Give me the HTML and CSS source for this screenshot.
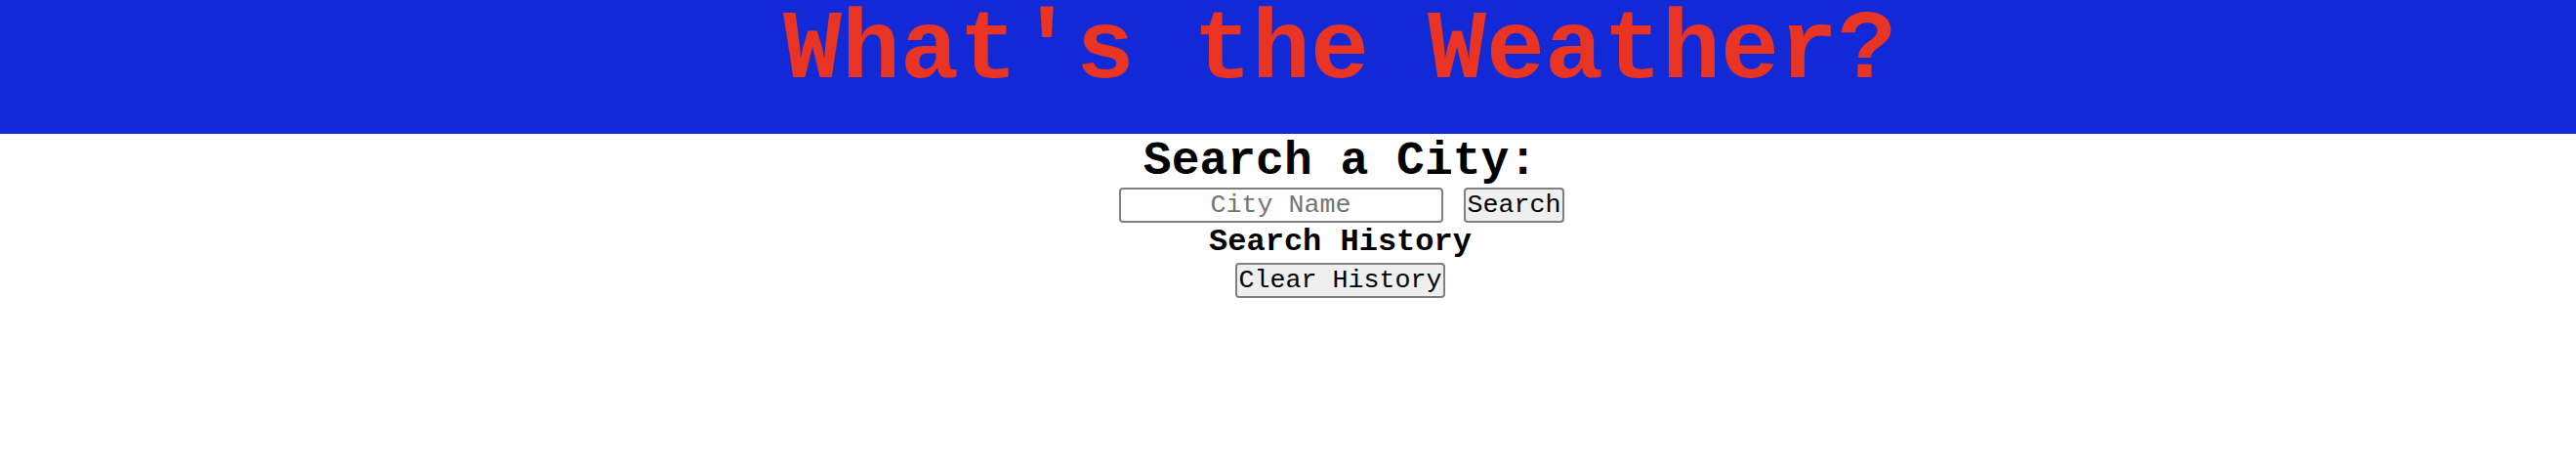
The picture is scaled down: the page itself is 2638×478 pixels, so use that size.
FILE: index.html
```html
<!DOCTYPE html>
<html lang="en">
<head>
<meta charset="utf-8">
<title>What's the Weather?</title>
<link rel="stylesheet" href="styles.css">
</head>
<body>
<header class="masthead">
  <h1 class="masthead__title">What's the Weather?</h1>
</header>
<main class="search">
  <h2 class="search__heading">Search a City:</h2>
  <div class="search__row">
    <input class="search__input" type="text" placeholder="City Name">
    <button class="btn" type="button">Search</button>
  </div>
  <h3 class="search__history">Search History</h3>
  <button class="btn" type="button">Clear History</button>
</main>
</body>
</html>
```

FILE: styles.css
```css
html, body {
  margin: 0;
  padding: 0;
  background: #ffffff;
}

body {
  font-family: "Courier New", Courier, "Liberation Mono", monospace;
  color: #000000;
}

.masthead {
  background: #1129d6;
  padding: 0 0 31px 106px;
  text-align: center;
}

.masthead__title {
  margin: 0;
  font-size: 100px;
  line-height: 106px;
  font-weight: bold;
  color: #ea3423;
}

.search {
  display: flex;
  flex-direction: column;
  align-items: center;
  padding-left: 107px;
}

.search__heading {
  margin: 4px 0 0 0;
  font-size: 48px;
  line-height: 48px;
  font-weight: bold;
}

.search__row {
  display: flex;
  align-items: center;
  gap: 21px;
  margin: 3px 0 0 3px;
}

.search__input {
  font-family: inherit;
  font-size: 26.67px;
  width: 332px;
  box-sizing: border-box;
  text-align: center;
  padding: 1px 2px;
  border: 2px solid #808080;
  border-radius: 4px;
  background: #ffffff;
}

.search__input::placeholder {
  color: #757575;
}

.btn {
  font-family: inherit;
  font-size: 26.67px;
  padding: 1px 2px;
  color: #000000;
  background: #efefef;
  border: 2px solid #808080;
  border-radius: 4px;
}

.search__history {
  margin: 4px 0 5px 0;
  font-size: 32px;
  line-height: 32px;
  font-weight: bold;
}
```
